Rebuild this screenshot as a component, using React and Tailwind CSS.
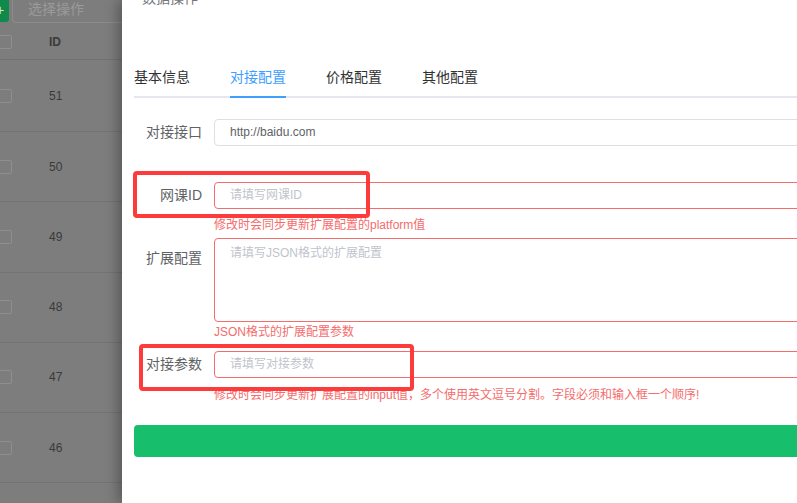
import React from "react";

const font = { fontFamily: '"Liberation Sans", "Noto Sans CJK SC", sans-serif' };

const rows = [
  { id: 51, h: "h-[72px]" },
  { id: 50, h: "h-[70.25px]" },
  { id: 49, h: "h-[70.25px]" },
  { id: 48, h: "h-[70.25px]" },
  { id: 47, h: "h-[70.25px]" },
  { id: 46, h: "h-[70.25px]" },
];

function BackTable() {
  return (
    <div className="w-[122px] shrink-0 relative">
      <div className="flex h-[24px] items-start">
        <div className="w-[9px] shrink-0 h-[22px] bg-[#0f8a4a] rounded-br-[3px] overflow-hidden text-[#cfe8da] text-[14px] leading-[20px] -indent-[4px]">
          +
        </div>
        <div className="ml-[3px] w-[140px] h-[23px] border border-t-0 border-[#8c8c8c] rounded-b-[4px] pl-[15px] text-[14px] leading-[18px] text-[#9a9a9a] shrink-0">
          选择操作
        </div>
      </div>
      <div className="h-[36px] border-b border-[#727272] flex items-center">
        <div className="w-[14px] h-[14px] -ml-[2px] border border-[#8f8f8f] rounded-[2px]" />
        <div className="ml-[37px] text-[12px] font-bold text-[#3a3a3a]">ID</div>
      </div>
      {rows.map((r) => (
        <div key={r.id} className={`${r.h} border-b border-[#737373] flex items-center`}>
          <div className="w-[14px] h-[14px] -ml-[2px] border border-[#8f8f8f] rounded-[2px]" />
          <div className="ml-[37px] text-[12px] text-[#3a3a3a]">{r.id}</div>
        </div>
      ))}
    </div>
  );
}

function Field({ label, children, top = false }) {
  return (
    <div className="flex">
      <div
        className={`w-[80px] shrink-0 pr-[12px] text-right text-[14px] text-[#606266] ${
          top ? "pt-[6px] leading-[28px]" : "leading-[27px]"
        }`}
      >
        {label}
      </div>
      <div className="flex-1">{children}</div>
    </div>
  );
}

export default function App() {
  return (
    <div
      className="relative w-[797px] h-[503px] overflow-hidden flex bg-[#7d7d7d]"
      style={font}
    >
      <BackTable />
      <div className="relative z-10 w-[720px] shrink-0 h-full bg-white shadow-[-4px_0_12px_rgba(0,0,0,0.3)]">
        <div className="flex h-[58px] items-start pl-[20px]">
          <span className="-mt-[10px] text-[14px] leading-[16px] text-[#72767b]">数据操作</span>
        </div>
        <div className="px-[12px]">
          <div className="flex items-start h-[40px] border-b-2 border-[#e4e7ed] text-[14px]">
            <div className="pr-[20px] leading-[38px] text-[#303133]">基本信息</div>
            <div className="px-[20px] h-[40px]">
              <div className="h-full leading-[38px] text-[#409eff] border-b-2 border-[#409eff]">对接配置</div>
            </div>
            <div className="px-[20px] leading-[38px] text-[#303133]">价格配置</div>
            <div className="px-[20px] leading-[38px] text-[#303133]">其他配置</div>
          </div>

          <div className="mt-[21px]">
            <Field label="对接接口">
              <div className="h-[27px] border border-[#dcdfe6] rounded-[4px] px-[15px] text-[12px] leading-[25px] text-[#606266]">
                http://baidu.com
              </div>
            </Field>

            <div className="mt-[36px]">
              <Field label="网课ID">
                <div className="h-[27px] border border-[#f56c6c] rounded-[4px] px-[15px] text-[12px] leading-[25px] text-[#c0c4cc]">
                  请填写网课ID
                </div>
                <div className="mt-[8px] text-[12px] leading-[16px] text-[#f56c6c]">
                  修改时会同步更新扩展配置的platform值
                </div>
              </Field>
            </div>

            <div className="mt-[5px]">
              <Field label="扩展配置" top>
                <div className="h-[84px] border border-[#f56c6c] rounded-[4px] px-[15px] py-[5px] text-[12px] leading-[18px] text-[#c0c4cc]">
                  请填写JSON格式的扩展配置
                </div>
                <div className="mt-[2px] text-[12px] leading-[16px] text-[#f56c6c]">
                  JSON格式的扩展配置参数
                </div>
              </Field>
            </div>

            <div className="mt-[11px]">
              <Field label="对接参数">
                <div className="h-[27px] border border-[#f56c6c] rounded-[4px] px-[15px] text-[12px] leading-[25px] text-[#c0c4cc]">
                  请填写对接参数
                </div>
                <div className="mt-[9px] text-[12px] leading-[16px] text-[#f56c6c] whitespace-nowrap">
                  修改时会同步更新扩展配置的input值，多个使用英文逗号分割。字段必须和输入框一个顺序!
                </div>
              </Field>
            </div>

            <div className="mt-[22px] h-[32px] rounded-[4px] bg-[#17be6b]" />
          </div>
        </div>
      </div>

      <div className="absolute z-20 left-[133px] top-[171px] w-[237px] h-[47px] border-4 border-[#fe3b3b] rounded-[4px] pointer-events-none" />
      <div className="absolute z-20 left-[139px] top-[344px] w-[275px] h-[47px] border-4 border-[#fe3b3b] rounded-[4px] pointer-events-none" />
    </div>
  );
}
